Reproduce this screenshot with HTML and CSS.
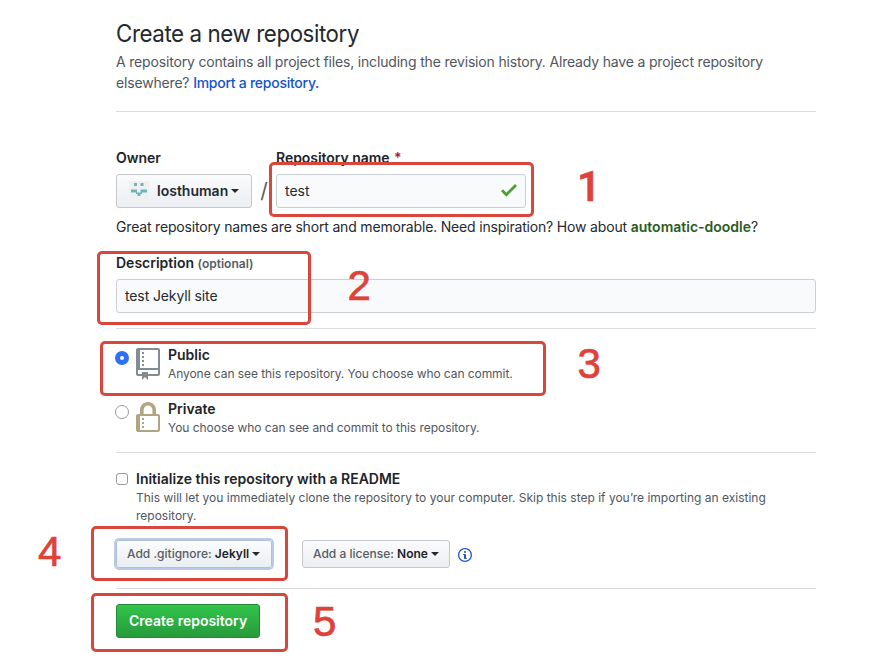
FILE: index.html
```html
<!DOCTYPE html>
<html lang="en">
<head>
<meta charset="utf-8">
<title>Create a new repository</title>
<link rel="stylesheet" href="styles.css">
</head>
<body>
<main class="page">
  <header class="head">
    <h1><span class="t-title">Create a new repository</span></h1>
    <p><span class="t-lead">A repository contains all project files, including the revision history. Already have a project repository</span><br><span class="t-lead">elsewhere? <a href="#">Import a repository.</a></span></p>
  </header>
  <section class="name-section">
    <div class="name-row">
      <div class="field">
        <span class="label">Owner</span>
        <button class="btn owner">
          <svg class="avatar" viewBox="0 0 20 20"><rect width="20" height="20" fill="#eff0f0"/><path fill="#6ab5c0" d="M5 2h3v3H5zM11.500 2h3v3h-3zM2 8.500h6v3h3.500v-3H18v3h-5V13h-1.500v2h-3v-2H7v-1.500H2z"/></svg>
          <span>losthuman</span><i class="caret"></i>
        </button>
      </div>
      <span class="slash">/</span>
      <div class="field">
        <span class="label t-repo">Repository name <b class="req">*</b></span>
        <div class="input repo-name"><span class="t-test">test</span>
          <svg class="check" viewBox="0 3.5 12 9.5"><path fill="#4c9f35" d="M12 5l-8 8-4-4 1.5-1.5L4 10l6.500-6.500L12 5z"/></svg>
        </div>
      </div>
    </div>
    <p class="hint"><span class="t-hint">Great repository names are short and memorable. Need inspiration? How about <b>automatic-doodle</b>?</span></p>
    <span class="label desc"><span>Description</span> <small>(optional)</small></span>
    <div class="input"><span class="t-site">test Jekyll site</span></div>
  </section>
  <section class="visibility">
    <div class="choice">
      <i class="radio on"></i>
      <svg class="kind" viewBox="0 0 12 16" fill="#828c95"><path fill-rule="evenodd" d="M4 9H3V8h1v1zm0-3H3v1h1V6zm0-2H3v1h1V4zm0-2H3v1h1V2zm8-1v12c0 .55-.45 1-1 1H6v2l-1.5-1.5L3 16v-2H1c-.55 0-1-.45-1-1V1c0-.55.45-1 1-1h10c.55 0 1 .45 1 1zm-1 10H1v2h2v-1h3v1h5v-2zm0-10H2v9h9V1z"/></svg>
      <div><strong>Public</strong><p class="note t-pubnote">Anyone can see this repository. You choose who can commit.</p></div>
    </div>
    <div class="choice">
      <i class="radio"></i>
      <svg class="kind" viewBox="0 0 12 16" fill="#b0a484"><path fill-rule="evenodd" d="M4 13H3v-1h1v1zm8-6v7c0 .55-.45 1-1 1H1c-.55 0-1-.45-1-1V7c0-.55.45-1 1-1h1V4c0-2.2 1.8-4 4-4s4 1.8 4 4v2h1c.55 0 1 .45 1 1zM3.8 6h4.41V4c0-1.22-.98-2.2-2.2-2.2-1.22 0-2.2.98-2.2 2.2v2H3.8zM11 7H2v7h9V7zM4 8H3v1h1V8zm0 2H3v1h1v-1z"/></svg>
      <div><strong>Private</strong><p class="note t-privnote">You choose who can see and commit to this repository.</p></div>
    </div>
  </section>
  <section class="init">
    <div class="init-row">
      <i class="checkbox"></i>
      <div><strong>Initialize this repository with a README</strong>
        <p class="note"><span>This will let you immediately clone the repository to your computer. Skip this step if you’re importing an existing</span><br><span>repository.</span></p></div>
    </div>
    <div class="buttons">
      <button class="btn small ignore focused"><span>Add .gitignore: <b>Jekyll</b></span><i class="caret"></i></button>
      <button class="btn small license"><span>Add a license: <b>None</b></span><i class="caret"></i></button>
      <svg class="info" viewBox="0 1 14 14" fill="#2158bd"><path fill-rule="evenodd" d="M6.3 5.69a.942.942 0 0 1-.28-.7c0-.28.09-.52.28-.7.19-.18.42-.28.7-.28.28 0 .52.09.7.28.18.19.28.42.28.7 0 .28-.09.52-.28.7a1 1 0 0 1-.7.3c-.28 0-.52-.11-.7-.3zM8 7.99c-.02-.25-.11-.48-.31-.69-.2-.19-.42-.3-.69-.31H6c-.27.02-.48.13-.69.31-.2.2-.3.44-.31.69h1v3c.02.27.11.5.31.69.2.2.42.31.69.31h1c.27 0 .48-.11.69-.31.2-.19.3-.42.31-.69H8V7.98v.01zM7 2.3c-3.14 0-5.7 2.54-5.7 5.68 0 3.14 2.56 5.7 5.7 5.7s5.7-2.55 5.7-5.7c0-3.15-2.56-5.69-5.7-5.69v.01zM7 .98c3.86 0 7 3.14 7 7s-3.14 7-7 7-7-3.12-7-7 3.14-7 7-7z"/></svg>
    </div>
  </section>
  <button class="btn primary"><span>Create repository</span></button>
</main>
<div class="mark m1"></div><div class="mark m2"></div><div class="mark m3"></div><div class="mark m4"></div><div class="mark m5"></div>
<span class="num n1">1</span><span class="num n2">2</span><span class="num n3">3</span><span class="num n4">4</span><span class="num n5">5</span>
</body>
</html>
```
FILE: styles.css
```css
* { box-sizing: border-box; }
body { margin: 0; height: 672px; position: relative; overflow: hidden; background: #fff; color: #24292e; font: 14px/21px Inter, "Liberation Sans", sans-serif; }
h1, p { margin: 0; }
span, strong { white-space: nowrap; }
b, strong { font-weight: 600; color: #202428; }
a { color: #1056c4; text-decoration: none; font-weight: 500; letter-spacing: -.26px; }
.page { width: 700px; margin-left: 116px; padding-top: 16px; }
.head { height: 96px; border-bottom: 1px solid #d9dbdd; color: #4f565e; }
h1 { height: 35px; font-size: 24px; line-height: 36px; font-weight: 400; color: #24292e; }
.t-title { display: inline-block; letter-spacing: -.45px; transform: scaleX(.93); transform-origin: 0 50%; }
.t-lead { letter-spacing: -.175px; }
.t-hint { letter-spacing: -.175px; }
.t-hint b { letter-spacing: 0; }
.t-site { letter-spacing: -.12px; }
.t-pubnote { letter-spacing: -.07px; }
.t-privnote { letter-spacing: -.04px; }
.name-section { height: 217px; padding-top: 35px; border-bottom: 1px solid #dcdee0; }
.name-row { display: flex; }
.field { display: flex; flex-direction: column; }
.label { display: block; height: 27px; font-weight: 600; color: #202428; }
.t-repo { letter-spacing: -.05px; }
.req { color: #b0152c; margin-left: 1px; }
.slash { width: 24px; padding-top: 33px; text-align: center; font-size: 21px; line-height: 21px; color: #555c64; }
.input { height: 34px; display: flex; align-items: center; padding: 0 8px 1px; border: 1px solid #cbcfd4; border-radius: 3px; background: #f9fafc; }
.repo-name { width: 250px; justify-content: space-between; }
.check { width: 16px; height: 12.7px; }
.hint { padding-top: 8px; }
.hint b { color: #2b5a1d; }
.desc { margin-top: 15px; height: 27px; }
small { font-size: 12px; color: #555c64; font-weight: 600; }
.btn { display: flex; align-items: center; font: 600 14px/20px Inter, "Liberation Sans", sans-serif; color: #24292e; border: 1px solid #c4c8cb; border-radius: 3px; background: linear-gradient(#fafbfc, #ebeef2); padding: 0 12px; white-space: nowrap; }
.owner { width: 136px; height: 34px; }
.avatar { width: 20px; height: 20px; margin-right: 8px; flex: none; }
.caret { border: 4px solid transparent; border-top-color: #24292e; border-bottom: 0; margin-left: 3px; }
.visibility { height: 124px; padding-top: 16px; border-bottom: 1px solid #dcdee0; }
.choice { display: flex; height: 54px; }
.choice strong, .init strong { display: block; line-height: 20px; }
.note { font-size: 12px; line-height: 18px; color: #4f565e; }
.radio { width: 14px; height: 14px; border: 1px solid #989a9c; border-radius: 50%; margin: 6px 7px 0 -1px; }
.radio.on { border: 5px solid #2e70f3; }
.kind { width: 24px; height: 32px; margin: 3px 8px 0 0; }
.init { height: 136px; padding-top: 16px; border-bottom: 1px solid #d9dbdd; }
.init-row { display: flex; height: 71px; }
.checkbox { width: 12px; height: 12px; margin: 4px 8px 0 0; border: 1px solid #989a9c; border-radius: 3px; background: #fff; }
.buttons { display: flex; align-items: center; }
.small { height: 28px; padding: 0 10px; font-size: 12px; font-weight: 500; color: #555c64; }
.ignore { width: 156px; margin-right: 30px; }
.license { width: 148px; }
.focused { box-shadow: 0 0 0 2px #b9cbea; border-color: #b4bfcc; }
.info { width: 14px; height: 14px; margin: 2px 0 0 8px; }
.primary { width: 144px; height: 34px; margin-top: 15px; color: #fff; border-color: #27883a; background: linear-gradient(#31c44a, #279b3a); }
.mark { position: absolute; border: 3px solid #d9463c; border-radius: 5px; }
.m1 { left: 269px; top: 162px; width: 265px; height: 55px; }
.m2 { left: 97px; top: 251px; width: 214px; height: 74px; }
.m3 { left: 100px; top: 341px; width: 446px; height: 55px; }
.m4 { left: 91px; top: 526px; width: 197px; height: 55px; }
.m5 { left: 91px; top: 593px; width: 197px; height: 59px; }
.num { position: absolute; font: 42px/42px "Liberation Sans", sans-serif; color: #de4238; -webkit-text-stroke: .7px #de4238; }
.n1 { left: 577px; top: 166px; font-family: Roboto, sans-serif; font-weight: 500; }
.n2 { left: 347.500px; top: 265px; }
.n3 { left: 577.500px; top: 343px; }
.n4 { left: 38px; top: 531px; }
.n5 { left: 313px; top: 601px; }
```
